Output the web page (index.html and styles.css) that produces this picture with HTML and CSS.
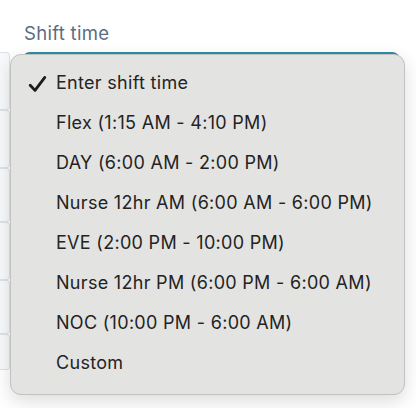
FILE: index.html
```html
<!DOCTYPE html>
<html lang="en">
<head>
  <meta charset="UTF-8">
  <meta name="viewport" content="width=device-width, initial-scale=1.0">
  <title>Shift time</title>
  <link rel="stylesheet" href="styles.css">
</head>
<body>

  <div class="page">
    <label class="label">Shift time</label>

    <div class="row">
      <div class="stub">
        <div class="stub-cell tall"></div>
        <div class="stub-cell tall"></div>
        <div class="stub-cell"></div>
        <div class="stub-cell tall"></div>
        <div class="stub-cell"></div>
        <div class="stub-cell short"></div>
      </div>
      <div class="field">
        <div class="select"></div>

        <!-- open dropdown menu -->
        <ul class="menu">
          <li class="item selected">
            <svg class="check" width="19" height="18" viewBox="0 0 19 18">
              <path d="M2.2 10.2 L7 15.4 L16.8 2.4" fill="none" stroke="#1c1c1c" stroke-width="2.8" stroke-linecap="round" stroke-linejoin="round"/>
            </svg>
            Enter shift time
          </li>
          <li class="item">Flex (1:15 AM - 4:10 PM)</li>
          <li class="item">DAY (6:00 AM - 2:00 PM)</li>
          <li class="item">Nurse 12hr AM (6:00 AM - 6:00 PM)</li>
          <li class="item">EVE (2:00 PM - 10:00 PM)</li>
          <li class="item">Nurse 12hr PM (6:00 PM - 6:00 AM)</li>
          <li class="item">NOC (10:00 PM - 6:00 AM)</li>
          <li class="item">Custom</li>
        </ul>
      </div>
    </div>
  </div>

</body>
</html>
```

FILE: styles.css
```css
body {
  margin: 0;
  background: #fff;
  font-family: Inter, "Noto Sans", sans-serif;
  color: #1f1f1f;
}

.page {
  min-height: 408px;
  box-sizing: border-box;
  padding-top: 21px;
}

.label {
  display: block;
  padding-left: 24px;
  font-size: 18.5px;
  line-height: 24px;
  letter-spacing: 0.3px;
  color: #5a6d7e;
  margin-bottom: 7px;
}

.row {
  display: flex;
  gap: 12px;
}

/* Shared Styles */
.stub {
  width: 10px;
  display: flex;
  flex-direction: column;
}

.stub-cell {
  height: 52px;
  border: 1px solid #dce2ea;
  border-left: none;
  border-radius: 0 4px 4px 0;
  background: #f8f9fb;
}

.stub-cell.tall {
  height: 56px;
}

.stub-cell.short {
  height: 34px;
}

.field {
  position: relative;
  width: 378px;
}

.select {
  height: 40px;
  border-top: 3px solid #2e8ca6;
  border-radius: 8px 8px 0 0;
}

/* Layout: dropdown */
.menu {
  position: absolute;
  left: -12px;
  top: 2px;
  width: 393px;
  margin: 0;
  padding: 8px 0 11px;
  list-style: none;
  background: #e3e3e2;
  border: 1px solid #c2c2c2;
  border-radius: 11px;
  box-shadow: 0 6px 18px rgba(0, 0, 0, 0.14);
}

.item {
  position: relative;
  height: 40px;
  line-height: 40px;
  padding-left: 45px;
  font-size: 18px;
  letter-spacing: 0.3px;
  color: #232323;
}

.check {
  position: absolute;
  left: 17px;
  top: 12px;
}
```
